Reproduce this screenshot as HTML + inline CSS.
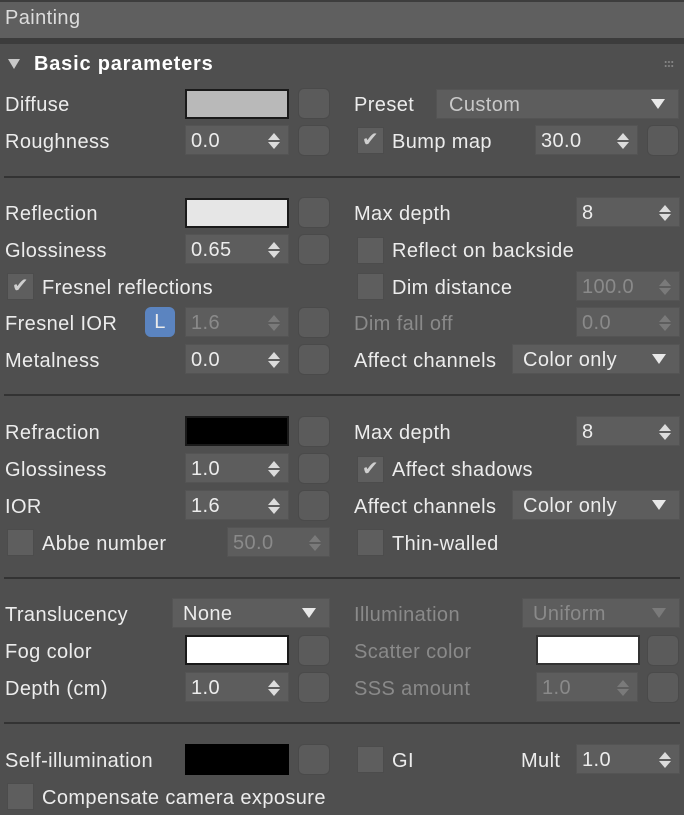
<!DOCTYPE html>
<html><head><meta charset="utf-8"><style>
*{margin:0;padding:0;box-sizing:border-box}
body{width:684px;height:815px;background:#4f4f4f;font-family:"Liberation Sans",sans-serif;font-size:20px;letter-spacing:.4px;color:#ececec;position:relative;overflow:hidden}
.a{position:absolute}
.t{position:absolute;line-height:30px;white-space:nowrap;margin-top:1px}
.d{color:#8a8a8a}
.f{position:absolute;height:30px;background:#5d5d5d;border:1px solid #545454;line-height:31px;padding-left:5px}
.sp::after{content:"";position:absolute;right:8px;top:7px;border-left:6px solid transparent;border-right:6px solid transparent;border-bottom:7px solid #dcdcdc}
.sp::before{content:"";position:absolute;right:8px;top:16px;border-left:6px solid transparent;border-right:6px solid transparent;border-top:7px solid #dcdcdc}
.sp.d::after{border-bottom-color:#7a7a7a}.sp.d::before{border-top-color:#7a7a7a}
.dd::after{content:"";position:absolute;right:13px;top:9px;border-left:7px solid transparent;border-right:7px solid transparent;border-top:10px solid #e8e8e8}
.dd.d::after{border-top-color:#7a7a7a}
.m{position:absolute;width:32px;height:31px;background:#5b5b5b;border:1px solid #4a4a4a;border-radius:6px}
.sw{position:absolute;width:104px;height:30px;border:2px solid #1a1a1a}
.cb{position:absolute;width:27px;height:27px;background:#5e5e5e;border:1px solid #4c4c4c;color:#cfcfcf;font-size:20px;line-height:25px;text-align:center}
.hr{position:absolute;left:4px;width:676px;height:2px;background:#333}
</style></head><body>
<div class="a" style="left:0;top:0;width:684px;height:38px;background:#5f5f5f;border-top:2px solid #3d3d3d"></div>
<div class="t" style="left:5px;top:2px;color:#dcdcdc">Painting</div>
<div class="a" style="left:0;top:38px;width:684px;height:6px;background:#3c3c3c"></div>
<div class="a" style="left:8px;top:59px;border-left:6px solid transparent;border-right:6px solid transparent;border-top:10px solid #c8c8c8"></div>
<div class="t" style="left:34px;top:48px;font-weight:bold;color:#fff;letter-spacing:.8px">Basic parameters</div>
<div class="a" style="left:664px;top:60px;width:10px;height:8px;background:radial-gradient(circle,#888 0.8px,transparent 1.2px) 0 0/3.3px 4px"></div>

<div class="t" style="left:5px;top:89px">Diffuse</div>
<div class="sw" style="left:185px;top:89px;background:#b9b9b9"></div>
<div class="m" style="left:298px;top:88px"></div>
<div class="t" style="left:354px;top:89px">Preset</div>
<div class="f dd" style="left:436px;top:89px;width:243px;padding-left:12px;color:#c8c8c8">Custom</div>
<div class="t" style="left:5px;top:126px">Roughness</div>
<div class="f sp" style="left:185px;top:125px;width:104px">0.0</div>
<div class="m" style="left:298px;top:125px"></div>
<div class="cb" style="left:357px;top:127px">✔</div>
<div class="t" style="left:392px;top:126px">Bump map</div>
<div class="f sp" style="left:535px;top:125px;width:103px">30.0</div>
<div class="m" style="left:647px;top:125px"></div>
<div class="hr" style="top:176px"></div>

<div class="t" style="left:5px;top:198px">Reflection</div>
<div class="sw" style="left:185px;top:198px;background:#e6e6e6"></div>
<div class="m" style="left:298px;top:197px"></div>
<div class="t" style="left:354px;top:198px">Max depth</div>
<div class="f sp" style="left:576px;top:197px;width:104px">8</div>
<div class="t" style="left:5px;top:235px">Glossiness</div>
<div class="f sp" style="left:185px;top:234px;width:104px">0.65</div>
<div class="m" style="left:298px;top:234px"></div>
<div class="cb" style="left:357px;top:237px"></div>
<div class="t" style="left:392px;top:235px">Reflect on backside</div>
<div class="cb" style="left:7px;top:273px">✔</div>
<div class="t" style="left:42px;top:272px">Fresnel reflections</div>
<div class="cb" style="left:357px;top:273px"></div>
<div class="t" style="left:392px;top:272px">Dim distance</div>
<div class="f sp d" style="left:576px;top:271px;width:104px">100.0</div>
<div class="t" style="left:5px;top:308px">Fresnel IOR</div>
<div class="a" style="left:145px;top:307px;width:30px;height:30px;background:#5b84c0;border-radius:6px;color:#eaeaea;text-align:center;line-height:30px">L</div>
<div class="f sp d" style="left:185px;top:307px;width:104px">1.6</div>
<div class="m" style="left:298px;top:307px"></div>
<div class="t d" style="left:354px;top:308px">Dim fall off</div>
<div class="f sp d" style="left:576px;top:307px;width:104px">0.0</div>
<div class="t" style="left:5px;top:345px">Metalness</div>
<div class="f sp" style="left:185px;top:344px;width:104px">0.0</div>
<div class="m" style="left:298px;top:344px"></div>
<div class="t" style="left:354px;top:345px">Affect channels</div>
<div class="f dd" style="left:512px;top:344px;width:168px;padding-left:10px">Color only</div>
<div class="hr" style="top:394px"></div>

<div class="t" style="left:5px;top:417px">Refraction</div>
<div class="sw" style="left:185px;top:416px;background:#000"></div>
<div class="m" style="left:298px;top:416px"></div>
<div class="t" style="left:354px;top:417px">Max depth</div>
<div class="f sp" style="left:576px;top:416px;width:104px">8</div>
<div class="t" style="left:5px;top:454px">Glossiness</div>
<div class="f sp" style="left:185px;top:453px;width:104px">1.0</div>
<div class="m" style="left:298px;top:453px"></div>
<div class="cb" style="left:357px;top:456px">✔</div>
<div class="t" style="left:392px;top:454px">Affect shadows</div>
<div class="t" style="left:5px;top:491px">IOR</div>
<div class="f sp" style="left:185px;top:490px;width:104px">1.6</div>
<div class="m" style="left:298px;top:490px"></div>
<div class="t" style="left:354px;top:491px">Affect channels</div>
<div class="f dd" style="left:512px;top:490px;width:168px;padding-left:10px">Color only</div>
<div class="cb" style="left:7px;top:529px"></div>
<div class="t" style="left:42px;top:528px">Abbe number</div>
<div class="f sp d" style="left:227px;top:527px;width:103px">50.0</div>
<div class="cb" style="left:357px;top:529px"></div>
<div class="t" style="left:392px;top:528px">Thin-walled</div>
<div class="hr" style="top:577px"></div>

<div class="t" style="left:5px;top:599px">Translucency</div>
<div class="f dd" style="left:172px;top:598px;width:158px;padding-left:10px">None</div>
<div class="t d" style="left:354px;top:599px">Illumination</div>
<div class="f dd d" style="left:522px;top:598px;width:158px;padding-left:10px">Uniform</div>
<div class="t" style="left:5px;top:636px">Fog color</div>
<div class="sw" style="left:185px;top:635px;background:#fff"></div>
<div class="m" style="left:298px;top:635px"></div>
<div class="t d" style="left:354px;top:636px">Scatter color</div>
<div class="sw" style="left:536px;top:635px;background:#fff;border-color:#333"></div>
<div class="m" style="left:647px;top:635px"></div>
<div class="t" style="left:5px;top:673px">Depth (cm)</div>
<div class="f sp" style="left:185px;top:672px;width:104px">1.0</div>
<div class="m" style="left:298px;top:672px"></div>
<div class="t d" style="left:354px;top:673px">SSS amount</div>
<div class="f sp d" style="left:536px;top:672px;width:102px">1.0</div>
<div class="m" style="left:647px;top:672px"></div>
<div class="hr" style="top:722px"></div>

<div class="t" style="left:5px;top:745px">Self-illumination</div>
<div class="a" style="left:185px;top:744px;width:104px;height:31px;background:#000"></div>
<div class="m" style="left:298px;top:744px"></div>
<div class="cb" style="left:357px;top:746px"></div>
<div class="t" style="left:392px;top:745px">GI</div>
<div class="t" style="left:521px;top:745px">Mult</div>
<div class="f sp" style="left:576px;top:744px;width:104px">1.0</div>
<div class="cb" style="left:7px;top:783px"></div>
<div class="t" style="left:42px;top:782px">Compensate camera exposure</div>
</body></html>
